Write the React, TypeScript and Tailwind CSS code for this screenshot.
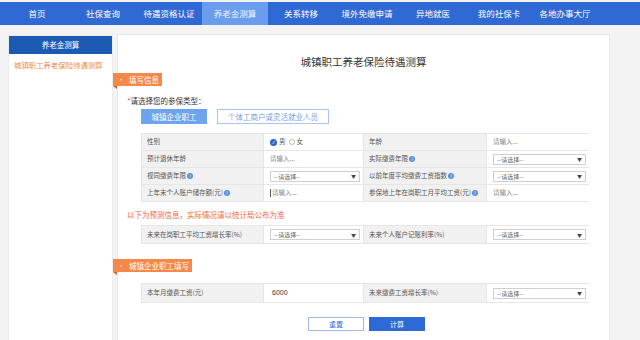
import React from 'react';

const font = { fontFamily: '"Noto Sans CJK SC", "Noto Sans", sans-serif' };

const navItems = ['首页', '社保查询', '待遇资格认证', '养老金测算', '关系转移', '境外免缴申请', '异地就医', '我的社保卡', '各地办事大厅'];

function Help() {
  return (
    <span className="ml-[1px] inline-flex h-[6px] w-[6px] shrink-0 items-center justify-center rounded-full bg-[#5b8fe0] text-[4.5px] leading-none text-white">?</span>
  );
}

function Select() {
  return (
    <div className="flex h-[11px] w-full items-center justify-between border border-[#cfcfcf] bg-white px-[3px] text-[6px] text-[#666]">
      <span>--请选择--</span>
      <span className="text-[5px] text-[#444]">▼</span>
    </div>
  );
}

function Input({ caret }: { caret?: boolean }) {
  return (
    <div className="flex items-center text-[6.5px] text-[#888]">
      {caret && <span className="mr-[1px] h-[8px] w-px bg-[#555]"></span>}
      请输入...
    </div>
  );
}

function Label({ text, help }: { text: string; help?: boolean }) {
  return (
    <div className="flex h-full items-center border-r border-[#e6e6e6] bg-[#f1f1f1] pl-[5px] text-[6.5px] text-[#555]">
      <span>{text}</span>
      {help && <Help />}
    </div>
  );
}

function Value({ children }: { children: React.ReactNode }) {
  return <div className="flex h-full items-center border-r border-[#e6e6e6] bg-white pl-[6px] pr-[3px] last:border-r-0">{children}</div>;
}

function Row({ h, children, last }: { h: string; children: React.ReactNode; last?: boolean }) {
  return (
    <div className={`grid grid-cols-[122px_100px_123px_102px] ${h} ${last ? '' : 'border-b border-[#e6e6e6]'}`}>{children}</div>
  );
}

function Tag({ text, w }: { text: string; w: string }) {
  return (
    <div className={`relative -ml-[5px] flex h-[13px] ${w} items-center bg-[#f5894a] pl-[5px] text-[7.5px] text-white`}>
      <span className="mr-[5px] text-[6px]">•</span>
      {text}
      <span className="absolute -bottom-[3px] left-0 h-0 w-0 border-l-[4px] border-t-[3px] border-l-transparent border-t-[#c9642a]"></span>
    </div>
  );
}

export default function App() {
  return (
    <div className="h-[340px] w-[640px] overflow-hidden bg-[#f3f3f3] pt-[2px]" style={font}>
      {/* top nav */}
      <div className="flex h-[23px] bg-[#2f69d3] pl-[4px]">
        {navItems.map((n) => (
          <div
            key={n}
            className={`flex w-[66px] items-center justify-center text-[8.5px] ${n === '养老金测算' ? 'bg-[#6a9ded] text-[#eef4ff]' : 'text-white'}`}
          >
            {n}
          </div>
        ))}
      </div>

      <div className="mt-[10px] flex gap-[4px] pl-[8px]">
        {/* sidebar */}
        <div className="h-[320px] w-[105px] border border-[#ececec] bg-white">
          <div className="flex h-[18px] items-center justify-center bg-[#1d5ab4] text-[7.5px] text-white">养老金测算</div>
          <div className="flex h-[22px] items-center pl-[5px] text-[7.4px] text-[#f08a4b]">城镇职工养老保险待遇测算</div>
        </div>

        {/* main panel */}
        <div className="-mt-px h-[320px] w-[493px] border border-[#e8e8e8] bg-white pt-[20px]">
          <div className="flex h-[14px] items-center justify-center text-[10.5px] text-[#333]">城镇职工养老保险待遇测算</div>

          <div className="mt-[4px]">
            <Tag text="填写信息" w="w-[49px]" />
          </div>

          <div className="mt-[10px] flex h-[10px] items-center pl-[9px] text-[7.5px] text-[#333]">
            <span className="text-[#e24b3b]">*</span>请选择您的参保类型：
          </div>

          <div className="mt-[3px] flex h-[15px] gap-[10px] pl-[23px]">
            <div className="flex w-[66px] items-center justify-center bg-[#6ea3ef] text-[7.5px] text-white">城镇企业职工</div>
            <div className="flex w-[112px] items-center justify-center border border-[#a9c4ee] bg-white text-[7.5px] text-[#7b9fd8]">个体工商户或灵活就业人员</div>
          </div>

          {/* table 1 */}
          <div className="ml-[23px] mt-[9px] w-[448px] border border-[#e6e6e6]">
            <Row h="h-[17px]">
              <Label text="性别" />
              <Value>
                <div className="flex items-center text-[6.5px] text-[#555]">
                  <span className="flex h-[7px] w-[7px] items-center justify-center rounded-full bg-[#2d64cf] text-[4.5px] text-white">✓</span>
                  <span className="ml-[2px]">男</span>
                  <span className="ml-[3px] h-[6px] w-[6px] rounded-full border border-[#bbb]"></span>
                  <span className="ml-[2px]">女</span>
                </div>
              </Value>
              <Label text="年龄" />
              <Value>
                <Input />
              </Value>
            </Row>
            <Row h="h-[17px]">
              <Label text="预计退休年龄" />
              <Value>
                <Input />
              </Value>
              <Label text="实际缴费年限" help />
              <Value>
                <Select />
              </Value>
            </Row>
            <Row h="h-[17px]">
              <Label text="视同缴费年限" help />
              <Value>
                <Select />
              </Value>
              <Label text="以前年度平均缴费工资指数" help />
              <Value>
                <Select />
              </Value>
            </Row>
            <Row h="h-[16px]" last>
              <Label text="上年末个人账户储存额(元)" help />
              <Value>
                <Input caret />
              </Value>
              <Label text="参保地上年在岗职工月平均工资(元)" help />
              <Value>
                <Input />
              </Value>
            </Row>
          </div>

          <div className="mt-[8px] flex h-[10px] items-center pl-[9px] text-[7.5px] text-[#f06b3a]">以下为预测信息，实际情况请以统计局公布为准</div>

          {/* table 2 */}
          <div className="ml-[23px] mt-[5px] w-[448px] border border-[#e6e6e6]">
            <Row h="h-[17px]" last>
              <Label text="未来在岗职工平均工资增长率(%)" />
              <Value>
                <Select />
              </Value>
              <Label text="未来个人账户记账利率(%)" />
              <Value>
                <Select />
              </Value>
            </Row>
          </div>

          <div className="mt-[15px]">
            <Tag text="城镇企业职工填写" w="w-[79px]" />
          </div>

          {/* table 3 */}
          <div className="ml-[23px] mt-[11px] w-[448px] border border-[#e6e6e6]">
            <Row h="h-[18px]" last>
              <Label text="本年月缴费工资(元)" />
              <Value>
                <span className="pl-[2px] font-['Liberation_Sans',sans-serif] text-[7px] text-[#333]">6000</span>
              </Value>
              <Label text="未来缴费工资增长率(%)" />
              <Value>
                <Select />
              </Value>
            </Row>
          </div>

          <div className="mt-[14px] flex h-[14px] justify-center gap-[5px] pl-[6px]">
            <div className="flex w-[56px] items-center justify-center border border-[#9fb9e6] bg-white text-[7px] text-[#3a6fd0]">重置</div>
            <div className="flex w-[56px] items-center justify-center bg-[#2d6ad6] text-[7px] text-white">计算</div>
          </div>
        </div>
      </div>
    </div>
  );
}
